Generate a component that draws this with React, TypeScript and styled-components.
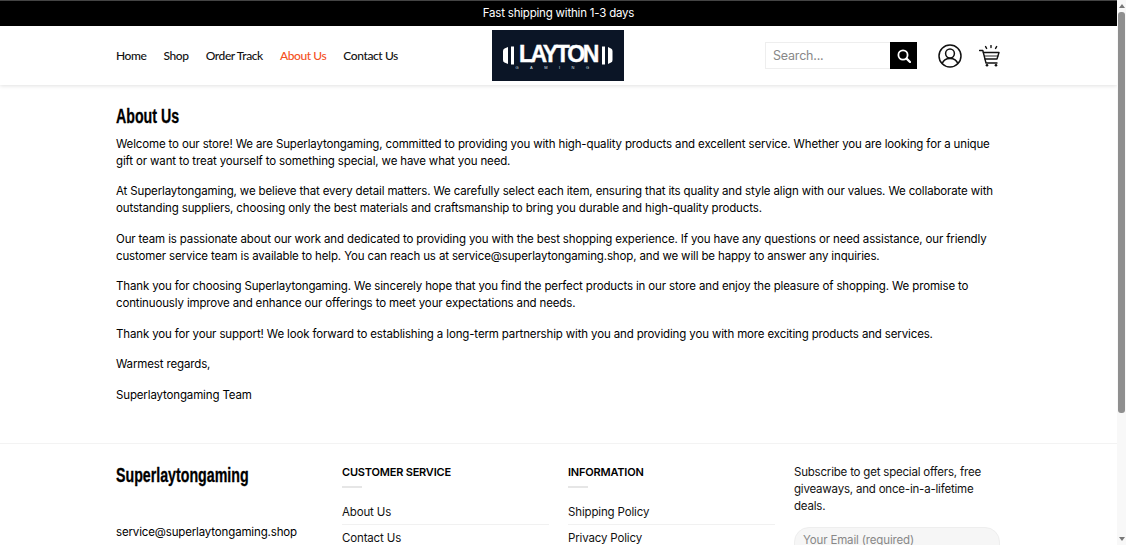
import styled, { createGlobalStyle } from "styled-components";

const GlobalStyle = createGlobalStyle`
    html, body { margin: 0; padding: 0; height: 100%; overflow: hidden; background: #fff; }
    * { box-sizing: border-box; }
    body { font-family: "Inter", "Liberation Sans", sans-serif; color: #000; }
`;

const navLinks = ["Home", "Shop", "Order Track", "About Us", "Contact Us"];

const paragraphs = [
    "Welcome to our store! We are Superlaytongaming, committed to providing you with high-quality products and excellent service. Whether you are looking for a unique gift or want to treat yourself to something special, we have what you need.",
    "At Superlaytongaming, we believe that every detail matters. We carefully select each item, ensuring that its quality and style align with our values. We collaborate with outstanding suppliers, choosing only the best materials and craftsmanship to bring you durable and high-quality products.",
    "Our team is passionate about our work and dedicated to providing you with the best shopping experience. If you have any questions or need assistance, our friendly customer service team is available to help. You can reach us at service@superlaytongaming.shop, and we will be happy to answer any inquiries.",
    "Thank you for choosing Superlaytongaming. We sincerely hope that you find the perfect products in our store and enjoy the pleasure of shopping. We promise to continuously improve and enhance our offerings to meet your expectations and needs.",
    "Thank you for your support! We look forward to establishing a long-term partnership with you and providing you with more exciting products and services.",
    "Warmest regards,",
    "Superlaytongaming Team",
];

export default function App() {
    return (
        <Shell>
            <GlobalStyle />
            <Page>
                <Announcement>Fast shipping within 1-3 days</Announcement>
                <Header>
                    <HeaderInner>
                        <Nav>
                            {navLinks.map((l) => (
                                <NavLink key={l} $active={l === "About Us"}>{l}</NavLink>
                            ))}
                        </Nav>
                        <Logo>
                            <svg width="132" height="51" viewBox="0 0 132 51" aria-hidden="true">
                                <path d="M16 17 V34 L12.5 32.5 Q11 32 11 30 V21 Q11 19 12.5 18.5 Z M19 16.5 H22 V34.5 H19 Z M110 16.5 H113 V34.5 H110 Z M116 17 L119 18.5 Q120.5 19 120.5 21 V30 Q120.5 32 119 32.5 L116 34 Z" fill="#fff" />
                            </svg>
                            <LogoWord>LAYTON</LogoWord>
                            <LogoSub>GAMING</LogoSub>
                        </Logo>
                        <Tools>
                            <Search>
                                <SearchField>Search...</SearchField>
                                <SearchButton>
                                    <svg width="14" height="14" viewBox="0 0 14 14" fill="none" stroke="#fff" strokeWidth="1.8" strokeLinecap="round" aria-hidden="true">
                                        <circle cx="6" cy="6" r="4.6" />
                                        <path d="M9.6 9.6 L13 13" strokeWidth="2.2" />
                                    </svg>
                                </SearchButton>
                            </Search>
                            <svg width="24" height="24" viewBox="0 0 24 24" fill="none" stroke="#111" strokeWidth="1.5" aria-hidden="true">
                                <circle cx="12" cy="12" r="11" />
                                <circle cx="12" cy="9.5" r="4.4" />
                                <path d="M4.2 19.8 C5.2 16.2 8.5 14.4 12 14.4 C15.5 14.4 18.8 16.2 19.8 19.8" />
                            </svg>
                            <svg width="21" height="22" viewBox="0 0 21 22" fill="none" stroke="#111" strokeWidth="1.4" strokeLinecap="round" strokeLinejoin="round" aria-hidden="true">
                                <path d="M0.5 5.5 H3.8 L7 18 H18" />
                                <path d="M4.4 7.5 H20 L18 14 H6" />
                                <path d="M5.4 11 H19" strokeWidth="0.9" />
                                <circle cx="8" cy="20.2" r="1.3" fill="#111" stroke="none" />
                                <circle cx="17" cy="20.2" r="1.3" fill="#111" stroke="none" />
                                <path d="M12 0.5 V2.6 M6.6 1.6 L7.6 3.4 M17.6 1.6 L16.6 3.4" />
                            </svg>
                        </Tools>
                    </HeaderInner>
                </Header>
                <Main>
                    <Title><Condensed>About Us</Condensed></Title>
                    {paragraphs.map((p) => (
                        <Paragraph key={p}>{p}</Paragraph>
                    ))}
                </Main>
                <Footer>
                    <FooterInner>
                        <div>
                            <Brand><Condensed>Superlaytongaming</Condensed></Brand>
                            <BrandMail>service@superlaytongaming.shop</BrandMail>
                        </div>
                        <div>
                            <ColumnTitle>CUSTOMER SERVICE</ColumnTitle>
                            <Rule />
                            <FooterLink>About Us</FooterLink>
                            <FooterLink>Contact Us</FooterLink>
                        </div>
                        <div>
                            <ColumnTitle>INFORMATION</ColumnTitle>
                            <Rule />
                            <FooterLink>Shipping Policy</FooterLink>
                            <FooterLink>Privacy Policy</FooterLink>
                        </div>
                        <div>
                            <Subscribe>Subscribe to get special offers, free giveaways, and once-in-a-lifetime deals.</Subscribe>
                            <EmailField>Your Email (required)</EmailField>
                        </div>
                    </FooterInner>
                </Footer>
            </Page>
            <Scrollbar>
                <Arrow $up />
                <Track><Thumb /></Track>
                <Arrow />
            </Scrollbar>
        </Shell>
    );
}

const Shell = styled.div`
    display: flex;
    width: 1126px;
    height: 545px;
    overflow: hidden;
`;

const Page = styled.div`
    flex: 0 0 1117px;
    height: 545px;
    overflow: hidden;
`;

const Announcement = styled.div`
    height: 26px;
    background: #000;
    border-top: 1px solid #444;
    color: #fff;
    font-size: 11.5px;
    letter-spacing: -0.2px;
    line-height: 25px;
    text-align: center;
`;

const Header = styled.header`
    height: 59px;
    background: #fff;
    box-shadow: 0 1px 4px rgba(0, 0, 0, 0.12);
`;

const HeaderInner = styled.div`
    display: grid;
    grid-template-columns: 376px 132px 376px;
    align-items: center;
    width: 884px;
    height: 100%;
    margin-left: 116px;
`;

const Nav = styled.nav`
    display: flex;
    gap: 17px;
`;

const NavLink = styled.a<{ $active?: boolean }>`
    font-family: "Lato", sans-serif;
    font-size: 12px;
    font-weight: 500;
    letter-spacing: -0.4px;
    color: ${({ $active }) => ($active ? "#f4511e" : "#111")};
`;

const Logo = styled.div`
    position: relative;
    width: 132px;
    height: 51px;
    background: #0b1526;
    svg { display: block; }
`;

const LogoWord = styled.span`
    position: absolute;
    top: 14px;
    left: 0;
    right: 0;
    font-family: "Liberation Sans", sans-serif;
    font-size: 23px;
    font-weight: 700;
    letter-spacing: -2.3px;
    line-height: 20px;
    text-align: center;
    color: #fff;
    -webkit-text-stroke: 0.4px #fff;
`;

const LogoSub = styled.span`
    position: absolute;
    top: 35px;
    left: 0;
    right: 0;
    font-family: "Liberation Sans", sans-serif;
    font-size: 4px;
    letter-spacing: 11.5px;
    line-height: 5px;
    text-align: center;
    color: #dfe3ea;
`;

const Tools = styled.div`
    display: flex;
    align-items: center;
    justify-content: flex-end;
    > svg { flex: none; }
    > svg:last-child { margin-left: 17px; }
`;

const Search = styled.div`
    display: flex;
    width: 152px;
    height: 27px;
    margin-right: 21px;
`;

const SearchField = styled.div`
    flex: 1;
    border: 1px solid #eee;
    border-right: 0;
    padding-left: 7px;
    font-size: 12.5px;
    letter-spacing: -0.2px;
    line-height: 25px;
    color: #888;
`;

const SearchButton = styled.div`
    display: flex;
    align-items: center;
    justify-content: center;
    width: 27px;
    background: #000;
`;

const Main = styled.main`
    width: 884px;
    height: 358px;
    margin-left: 116px;
    padding-top: 20px;
`;

const Condensed = styled.span`
    display: inline-block;
    font-family: "Liberation Sans", sans-serif;
    font-weight: 700;
    white-space: nowrap;
    transform: scaleX(0.71);
    transform-origin: left center;
    -webkit-text-stroke: 0.3px #000;
`;

const Title = styled.h1`
    margin: 0 0 8.6px;
    font-size: 20px;
    font-weight: 700;
    line-height: 22px;
`;

const Paragraph = styled.p`
    margin: 0 0 13.5px;
    font-size: 11.5px;
    letter-spacing: -0.14px;
    line-height: 17px;
`;

const Footer = styled.footer`
    border-top: 1px solid #f3f3f3;
`;

const FooterInner = styled.div`
    display: grid;
    grid-template-columns: 226px 226px 226px 206px;
    width: 884px;
    margin-left: 116px;
    padding-top: 20px;
`;

const Brand = styled.div`
    font-size: 20px;
    line-height: 22px;
`;

const BrandMail = styled.div`
    margin-top: 38px;
    font-size: 11.5px;
    letter-spacing: -0.15px;
    line-height: 17px;
`;

const ColumnTitle = styled.div`
    font-size: 11px;
    font-weight: 600;
    letter-spacing: -0.2px;
    line-height: 16px;
`;

const Rule = styled.div`
    width: 20px;
    height: 2px;
    margin: 6px 0 11px;
    background: #e6e6e6;
`;

const FooterLink = styled.div`
    width: 207px;
    height: 26px;
    border-bottom: 1px solid #f1f1f1;
    font-size: 11.5px;
    letter-spacing: -0.15px;
    line-height: 26px;
    color: #111;
`;

const Subscribe = styled.p`
    width: 200px;
    margin: 0 0 12px;
    font-size: 11.5px;
    letter-spacing: -0.2px;
    line-height: 17px;
    color: #111;
`;

const EmailField = styled.div`
    width: 206px;
    height: 34px;
    padding-left: 8px;
    border: 1px solid #eee;
    border-radius: 15px;
    background: #f6f6f6;
    font-size: 11.5px;
    letter-spacing: -0.15px;
    line-height: 24px;
    color: #888;
`;

const Scrollbar = styled.div`
    display: flex;
    flex-direction: column;
    flex: 0 0 9px;
    background: #f8f8f8;
`;

const Arrow = styled.div<{ $up?: boolean }>`
    height: 12px;
    display: flex;
    align-items: center;
    justify-content: center;
    &::before {
        content: "";
        border-left: 3px solid transparent;
        border-right: 3px solid transparent;
        ${({ $up }) => ($up ? "border-bottom: 4px solid #777;" : "border-top: 4px solid #777;")}
    }
`;

const Track = styled.div`
    flex: 1;
    padding: 0 1px;
`;

const Thumb = styled.div`
    height: 401px;
    border-radius: 3px;
    background: #8f8f8f;
`;
